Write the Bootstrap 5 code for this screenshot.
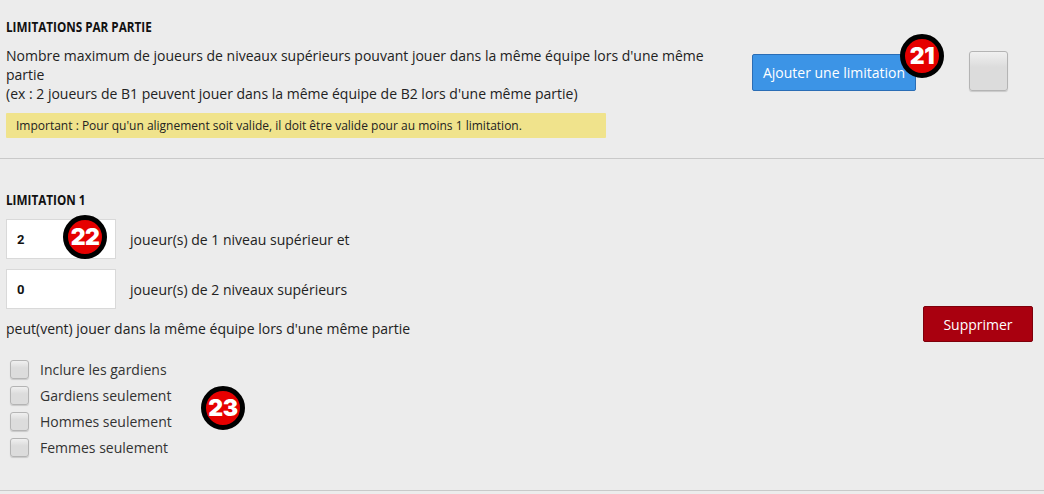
<!DOCTYPE html>
<html lang="fr">
<head>
  <meta charset="UTF-8" />
  <meta name="viewport" content="width=device-width, initial-scale=1.0"/>
  <title>Limitations par partie</title>
  <link href="https://cdn.jsdelivr.net/npm/bootstrap@5.3.0/dist/css/bootstrap.min.css" rel="stylesheet"/>
  <style>
    body { background-color: #ececec; color: #222; font-family: "Open Sans", "Liberation Sans", sans-serif; font-size: 14px; line-height: 19px; overflow: hidden; }
    .limit-block { position: relative; border-bottom: 1px solid #c9c9c9; padding-left: 6px; }
    .block-top { height: 159px; padding-top: 17px; }
    .block-main { height: 332px; padding-top: 31px; }
    .block-title { display: block; width: max-content; font-family: "Open Sans", sans-serif; font-weight: 700; font-size: 15px; line-height: 19px; color: #111; text-transform: uppercase; margin: 0; transform: scaleX(0.78); transform-origin: left center; }
    .intro-col { width: 725px; }
    .intro-text { margin: 10px 0 10px; }
    .notice-box { width: 600px; height: 25px; padding: 0 10px; background-color: #f0e38c; border-radius: 1px; font-size: 12px; line-height: 25px; }
    .add-col { margin-left: 21px; padding-top: 37px; }
    .btn-add { width: 164px; height: 37px; padding: 0; background-color: #3c94e6; border: 1px solid #2a6db5; border-radius: 2px; color: #fff; font-size: 14px; }
    .tick-big { width: 39px; height: 40px; margin-left: 53px; margin-top: -3px; }
    .tick-box { display: block; background: linear-gradient(#f0f0f0, #dcdcdc 40%, #dcdcdc); border: 1px solid #b4b4b4; border-radius: 3px; box-shadow: 0 1px 1px rgba(0,0,0,0.15); }
    .num-input { width: 110px; height: 40px; padding: 0 10px; background-color: #fff; border: 1px solid #d9d9d9; border-radius: 0; font-family: "Roboto", sans-serif; font-weight: 700; font-size: 13px; color: #111; }
    .num-row { height: 40px; margin-bottom: 10px; }
    .num-label { margin-left: 14px; }
    .intro-last { height: 41px; }
    .btn-remove { position: absolute; top: 147px; right: 11px; width: 110px; height: 36px; padding: 0; background-color: #a9000f; border: 1px solid #7e000b; border-radius: 2px; color: #fff; font-size: 14px; }
    .tick-row { height: 26px; padding-left: 4px; }
    .tick-row .tick-box { width: 19px; height: 19px; margin-right: 11px; }
    .tick-row span:last-child { color: #333; }
    .num-badge { position: absolute; width: 44px; height: 44px; display: flex; align-items: center; justify-content: center; background-color: #e60000; border: 5px solid #000; border-radius: 50%; color: #fff; font-family: "Inter", "Liberation Sans", sans-serif; font-weight: 900; font-size: 23px; letter-spacing: -0.5px; z-index: 2; }
  </style>
</head>
<body>

  <div class="limit-block block-top d-flex">
    <div class="intro-col">
      <h6 class="block-title">Limitations par partie</h6>
      <p class="intro-text">Nombre maximum de joueurs de niveaux supérieurs pouvant jouer dans la même équipe lors d'une même partie<br>(ex : 2 joueurs de B1 peuvent jouer dans la même équipe de B2 lors d'une même partie)</p>
      <div class="notice-box">Important : Pour qu'un alignement soit valide, il doit être valide pour au moins 1 limitation.</div>
    </div>
    <div class="add-col d-flex align-items-start">
      <button type="button" class="btn btn-add">Ajouter une limitation</button>
      <span class="tick-box tick-big"></span>
    </div>
    <span class="num-badge" style="left: 900px; top: 34px;">21</span>
  </div>

  <div class="limit-block block-main">
    <h6 class="block-title" style="margin-bottom: 10px;">Limitation 1</h6>
    <div class="num-row d-flex align-items-center">
      <input type="text" class="form-control num-input" value="2">
      <span class="num-label">joueur(s) de 1 niveau supérieur et</span>
    </div>
    <div class="num-row d-flex align-items-center">
      <input type="text" class="form-control num-input" value="0">
      <span class="num-label">joueur(s) de 2 niveaux supérieurs</span>
    </div>
    <p class="mb-0 intro-last">peut(vent) jouer dans la même équipe lors d'une même partie</p>
    <div class="tick-row d-flex align-items-start"><span class="tick-box"></span><span>Inclure les gardiens</span></div>
    <div class="tick-row d-flex align-items-start"><span class="tick-box"></span><span>Gardiens seulement</span></div>
    <div class="tick-row d-flex align-items-start"><span class="tick-box"></span><span>Hommes seulement</span></div>
    <div class="tick-row d-flex align-items-start"><span class="tick-box"></span><span>Femmes seulement</span></div>
    <button type="button" class="btn btn-remove">Supprimer</button>
    <span class="num-badge" style="left: 63px; top: 56px;">22</span>
    <span class="num-badge" style="left: 201px; top: 227px;">23</span>
  </div>

</body>
</html>
